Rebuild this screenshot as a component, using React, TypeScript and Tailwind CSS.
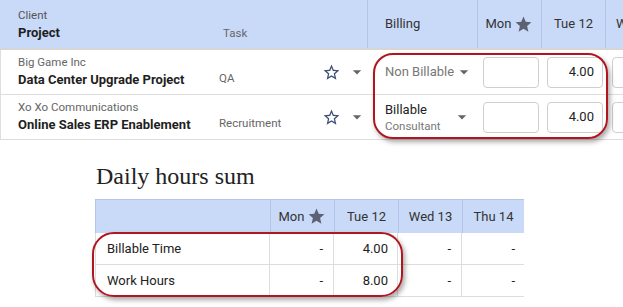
import React from "react";

const StarFilled = ({ className = "" }: { className?: string }) => (
  <svg viewBox="0 0 24 24" className={className} fill="currentColor">
    <path d="M12 17.27L18.18 21l-1.64-7.03L22 9.24l-7.19-.61L12 2 9.19 8.63 2 9.24l5.46 4.73L5.82 21z" />
  </svg>
);

const StarOutline = ({ className = "" }: { className?: string }) => (
  <svg viewBox="0 0 24 24" className={className} fill="currentColor">
    <path d="M22 9.24l-7.19-.62L12 2 9.19 8.63 2 9.24l5.46 4.73L5.82 21 12 17.27 18.18 21l-1.63-7.03L22 9.24zM12 15.4l-3.76 2.27 1-4.28-3.32-2.88 4.38-.38L12 6.1l1.71 4.04 4.38.38-3.32 2.88 1 4.28L12 15.4z" />
  </svg>
);

const Caret = ({ className = "" }: { className?: string }) => (
  <svg viewBox="0 0 24 24" className={className} fill="currentColor">
    <path d="M7 10l5 5 5-5z" />
  </svg>
);

const rows = [
  { client: "Big Game Inc", project: "Data Center Upgrade Project", task: "QA", billing: "Non Billable", sub: "" },
  { client: "Xo Xo Communications", project: "Online Sales ERP Enablement", task: "Recruitment", billing: "Billable", sub: "Consultant" },
];

const sums = [
  { label: "Billable Time", tue: "4.00" },
  { label: "Work Hours", tue: "8.00" },
];

const Box = ({ value }: { value?: string }) => (
  <div className="h-[31px] w-[56px] rounded-[4px] border border-[#cfcfcf] bg-white flex items-center justify-end pr-[8px] text-[13px] text-[#222]">
    {value}
  </div>
);

export default function App() {
  return (
    <div className="w-[623px] h-[307px] overflow-hidden bg-white" style={{ fontFamily: "Roboto, 'Liberation Sans', sans-serif" }}>
      {/* timesheet grid */}
      <div className="relative w-[700px]">
        <div className="flex h-[50px] bg-[#c9daf8] border-b-2 border-[#d6d6d6]">
          <div className="w-[210px] pl-[18px] flex flex-col justify-center pt-[2px]">
            <span className="text-[11.5px] leading-[15px] text-[#555]">Client</span>
            <span className="text-[13px] leading-[19px] font-bold text-[#1f1f1f]">Project</span>
          </div>
          <div className="w-[100px] pl-[13px] pt-[25px] text-[11.5px] text-[#666]">Task</div>
          <div className="w-[57px]" />
          <div className="w-[110px] pl-[17px] flex items-center text-[13px] text-[#333] border-l border-[#b3c6ea]">Billing</div>
          <div className="w-[64px] flex items-center justify-center gap-[3px] text-[13px] text-[#333] border-l border-[#b3c6ea]">
            Mon <StarFilled className="w-[19px] h-[19px] text-[#5c6273]" />
          </div>
          <div className="w-[64px] flex items-center justify-center text-[13px] text-[#333] border-l border-[#b3c6ea]">Tue 12</div>
          <div className="w-[64px] flex items-center pl-[10px] text-[13px] text-[#333] border-l border-[#b3c6ea]">Wed 13</div>
        </div>
        {rows.map((r) => (
          <div key={r.client} className="flex h-[45px] border-b border-l border-[#dedede]">
            <div className="w-[209px] pl-[17px] flex flex-col justify-center">
              <span className="text-[11.5px] leading-[16px] text-[#666]">{r.client}</span>
              <span className="text-[13px] leading-[20px] font-bold text-[#1f1f1f]">{r.project}</span>
            </div>
            <div className="w-[100px] pl-[9px] pt-[20px] text-[11.5px] text-[#666]">{r.task}</div>
            <div className="w-[58px] flex items-center pl-[12px] gap-[6px]">
              <StarOutline className="w-[19px] h-[19px] text-[#3d4f78]" />
              <Caret className="w-[20px] h-[20px] text-[#666]" />
            </div>
            <div className="w-[110px] pl-[17px] pr-[6px] flex items-center justify-between">
              {r.sub ? (
                <div className="flex flex-col">
                  <span className="text-[13px] leading-[18px] text-[#222]">{r.billing}</span>
                  <span className="text-[11.5px] leading-[15px] text-[#777]">{r.sub}</span>
                </div>
              ) : (
                <span className="text-[13px] text-[#777] whitespace-nowrap">{r.billing}</span>
              )}
              <Caret className="w-[20px] h-[20px] shrink-0 text-[#666]" />
            </div>
            <div className="w-[64px] flex items-center pl-[5px]"><Box /></div>
            <div className="w-[64px] flex items-center pl-[5px]"><Box value="4.00" /></div>
            <div className="w-[64px] flex items-center pl-[6px]"><Box /></div>
          </div>
        ))}
        <div className="absolute left-[373px] top-[53px] w-[235px] h-[86px] rounded-[20px] border-2 border-[#b0161f] shadow-[2px_3px_5px_rgba(0,0,0,0.35)]" />
      </div>

      {/* daily sums */}
      <div className="pl-[95px] pt-[22px]">
        <h2 className="text-[24px] leading-[28px] text-[#222] ml-[1px]" style={{ fontFamily: "'Liberation Serif', 'DejaVu Serif', serif" }}>
          Daily hours sum
        </h2>
        <div className="relative mt-[9px] w-[429px]">
          <div className="flex h-[34px] bg-[#c9daf8] border-t border-l border-[#b3c6ea] text-[13px] text-[#333]">
            <div className="w-[174px]" />
            <div className="w-[64px] flex items-center justify-center gap-[3px] border-l border-[#b3c6ea]">
              Mon <StarFilled className="w-[19px] h-[19px] text-[#5c6273]" />
            </div>
            <div className="w-[64px] flex items-center justify-center border-l border-[#b3c6ea]">Tue 12</div>
            <div className="w-[64px] flex items-center justify-center border-l border-[#b3c6ea]">Wed 13</div>
            <div className="w-[62px] flex items-center justify-center border-l border-[#b3c6ea]">Thu 14</div>
          </div>
          {sums.map((s) => (
            <div key={s.label} className="flex h-[32px] border-b border-l border-[#dddddd] text-[13px] text-[#222]">
              <div className="w-[173px] pl-[11px] flex items-center">{s.label}</div>
              <div className="w-[64px] flex items-center justify-end pr-[10px] border-l border-[#dddddd]">-</div>
              <div className="w-[64px] flex items-center justify-end pr-[9px] border-l border-[#dddddd]">{s.tue}</div>
              <div className="w-[64px] flex items-center justify-end pr-[10px] border-l border-[#dddddd]">-</div>
              <div className="w-[62px] flex items-center justify-end pr-[8px] border-l border-[#dddddd]">-</div>
            </div>
          ))}
          <div className="absolute left-[-3px] top-[33px] w-[311px] h-[65px] rounded-[22px] border-2 border-[#b0161f] shadow-[2px_3px_5px_rgba(0,0,0,0.35)]" />
        </div>
      </div>
    </div>
  );
}
